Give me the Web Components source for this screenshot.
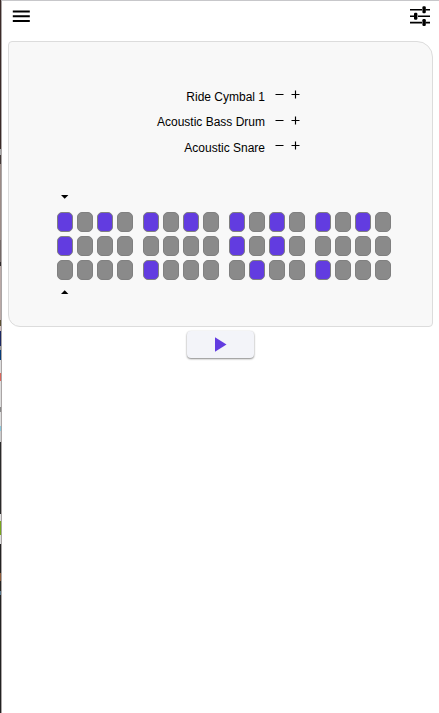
<!DOCTYPE html>
<html lang="en">
<head>
<meta charset="utf-8">
<title>Drum Machine</title>
<style>
  html, body { height: 100%; margin: 0; }
  body { background: #fff; color: #000; font: 12px/14px "Liberation Sans", Arial, sans-serif; overflow: hidden; }
</style>
</head>
<body>
<drum-app></drum-app>
<script>
class AppIcon extends HTMLElement {
  constructor() {
    super();
    this.attachShadow({ mode: 'open' });
    this.icons = {
      menu: { w: 18, h: 13, body: '<path d="M.8 1.5h17M.8 6.3h17M.8 11h17" stroke="currentColor" stroke-width="2"/>' },
      tune: { w: 20, h: 20, body: '<path d="M0 3.7h12M15.5 3.7H20M0 10.2h4M8 10.2h12M0 16.6h12M15.5 16.6H20" stroke="currentColor" stroke-width="1.6"/><g fill="currentColor"><rect x="12.4" y=".3" width="3.4" height="7" rx="1.2"/><rect x="4" y="6.7" width="3.4" height="7" rx="1.2"/><rect x="12.4" y="13" width="3.4" height="7" rx="1.2"/></g>' },
      minus: { w: 9, h: 9, body: '<path d="M.5 4.5h8" stroke="currentColor"/>' },
      plus: { w: 9, h: 9, body: '<path d="M.5 4.5h8M4.5.5v8" stroke="currentColor" stroke-width="1.15"/>' },
      down: { w: 8, h: 4, body: '<path d="M0 0h7.4L3.7 3.7z" fill="currentColor"/>' },
      up: { w: 8, h: 4, body: '<path d="M0 4h7.4L3.7.3z" fill="currentColor"/>' },
      play: { w: 12, h: 15, body: '<path d="M0 .2v14.6l11.5-7.3z" fill="currentColor"/>' }
    };
  }

  connectedCallback() {
    const { w, h, body } = this.icons[this.getAttribute('name')];
    this.shadowRoot.innerHTML = `
      <style>
        :host { display: block; flex: none; width: ${w}px; height: ${h}px; }
        svg { display: block; }
      </style>
      <svg width="${w}" height="${h}" viewBox="0 0 ${w} ${h}" fill="none" aria-hidden="true">${body}</svg>
    `;
  }
}

class TopBar extends HTMLElement {
  constructor() {
    super();
    this.attachShadow({ mode: 'open' });
  }

  connectedCallback() {
    this.shadowRoot.innerHTML = `
      <style>
        :host {
          display: flex;
          justify-content: space-between;
          align-items: flex-start;
          height: 40px;
          box-sizing: border-box;
          padding: 5px 9px 0 10px;
        }
        .menu { margin-top: 4px; }
      </style>
      <app-icon class="menu" name="menu"></app-icon>
      <app-icon name="tune"></app-icon>
    `;
  }
}

class InstrumentRow extends HTMLElement {
  constructor() {
    super();
    this.attachShadow({ mode: 'open' });
  }

  connectedCallback() {
    this.shadowRoot.innerHTML = `
      <style>
        :host { display: flex; height: 25.4px; align-items: flex-start; }
        .name { width: 256px; text-align: right; white-space: nowrap; }
        .minus { margin: .2px 7px 0 10px; }
        .plus { margin-top: .2px; }
      </style>
      <div class="name"><slot></slot></div>
      <app-icon class="minus" name="minus"></app-icon>
      <app-icon class="plus" name="plus"></app-icon>
    `;
  }
}

class StepGrid extends HTMLElement {
  constructor() {
    super();
    this.attachShadow({ mode: 'open' });
    // one row per instrument, four beats of four steps
    this.pattern = [
      ['x.x.', 'x.x.', 'x.x.', 'x.x.'],
      ['x...', '....', 'x.x.', '....'],
      ['....', 'x...', '.x..', 'x...']
    ];
  }

  connectedCallback() {
    this.render();
  }

  render() {
    this.shadowRoot.innerHTML = `
      <style>
        :host { display: flex; flex-direction: column; gap: 4px; }
        .row { display: flex; gap: 10px; }
        .beat { display: flex; gap: 4px; }
        .step {
          width: 16px;
          height: 20px;
          box-sizing: border-box;
          border: 1px solid #808080;
          border-radius: 5px;
          background: #8a8a8a;
        }
        .step.on { background: #623ce0; }
      </style>
      ${this.pattern.map((row, r) => `
        <div class="row">
          ${row.map((beat, b) => `
            <div class="beat">
              ${[...beat].map((s, i) => `<div class="step ${s === 'x' ? 'on' : ''}" data-row="${r}" data-step="${b * 4 + i}"></div>`).join('')}
            </div>
          `).join('')}
        </div>
      `).join('')}
    `;

    this.shadowRoot.querySelectorAll('.step').forEach(step => {
      step.addEventListener('click', () => step.classList.toggle('on'));
    });
  }
}

class DrumPanel extends HTMLElement {
  constructor() {
    super();
    this.attachShadow({ mode: 'open' });
  }

  connectedCallback() {
    this.shadowRoot.innerHTML = `
      <style>
        :host {
          display: block;
          box-sizing: border-box;
          height: 286px;
          margin: 0 6px;
          padding-top: 48px;
          border: 1px solid #dcdcdc;
          border-radius: 4px 16px 4px 12px;
          background: #f8f8f8;
        }
        .instruments { height: 105px; }
        .sequencer { padding-left: 48px; }
        .marker { margin-left: 4px; }
        step-grid { margin: 13px 0 10px; }
      </style>
      <div class="instruments"><slot></slot></div>
      <div class="sequencer">
        <app-icon class="marker" name="down"></app-icon>
        <step-grid></step-grid>
        <app-icon class="marker" name="up"></app-icon>
      </div>
    `;
  }
}

class PlayButton extends HTMLElement {
  constructor() {
    super();
    this.attachShadow({ mode: 'open' });
  }

  connectedCallback() {
    this.shadowRoot.innerHTML = `
      <style>
        :host { display: flex; justify-content: center; margin-top: 4px; }
        button {
          display: flex;
          align-items: center;
          justify-content: center;
          width: 67px;
          height: 27px;
          padding: 0;
          border: 0;
          border-radius: 4px;
          background: #f3f4f9;
          color: #623ce0;
          box-shadow: 0 1px 2px rgba(0, 0, 0, .45), 0 0 2px rgba(0, 0, 0, .08);
        }
      </style>
      <button type="button" aria-label="Play"><app-icon name="play"></app-icon></button>
    `;
  }
}

class DrumApp extends HTMLElement {
  constructor() {
    super();
    this.attachShadow({ mode: 'open' });
  }

  connectedCallback() {
    this.shadowRoot.innerHTML = `
      <style>
        :host { display: flex; height: 100vh; }
        /* sliver of desktop showing beside the window */
        .edge {
          width: 1px;
          background: linear-gradient(#3b2b28 0 149px, #aaa 149px 155px, #443a38 155px 164px, #9b8b86 164px 240px,
            #766b68 240px 262px, #312c2c 262px 266px, #b9a9a6 266px 320px, #5b5132 320px 326px, #cbb 326px 331px,
            #1b2862 331px 346px, #999 346px 350px, #073c78 350px 360px, #ddd 360px 373px, #d9665c 373px 381px,
            #ddd 381px 407px, #888 407px 412px, #ddd 412px 426px, #8bc7dc 426px 431px, #ccc 431px 442px,
            #292929 442px 514px, #ddd 514px 521px, #77a51b 521px 535px, #ddd 535px 544px, #222 544px 573px,
            #8b5937 573px 581px, #222 581px 591px, #55768c 591px 595px, #222 595px);
        }
        .window {
          flex: 1;
          min-width: 0;
          border-top: 1px solid #c7c7ca;
          border-left: 1px solid #aaa5a5;
        }
      </style>
      <div class="edge"></div>
      <div class="window">
        <top-bar></top-bar>
        <drum-panel>
          <instrument-row>Ride Cymbal 1</instrument-row>
          <instrument-row>Acoustic Bass Drum</instrument-row>
          <instrument-row>Acoustic Snare</instrument-row>
        </drum-panel>
        <play-button></play-button>
      </div>
    `;
  }
}

customElements.define('app-icon', AppIcon);
customElements.define('top-bar', TopBar);
customElements.define('instrument-row', InstrumentRow);
customElements.define('step-grid', StepGrid);
customElements.define('drum-panel', DrumPanel);
customElements.define('play-button', PlayButton);
customElements.define('drum-app', DrumApp);
</script>
</body>
</html>
